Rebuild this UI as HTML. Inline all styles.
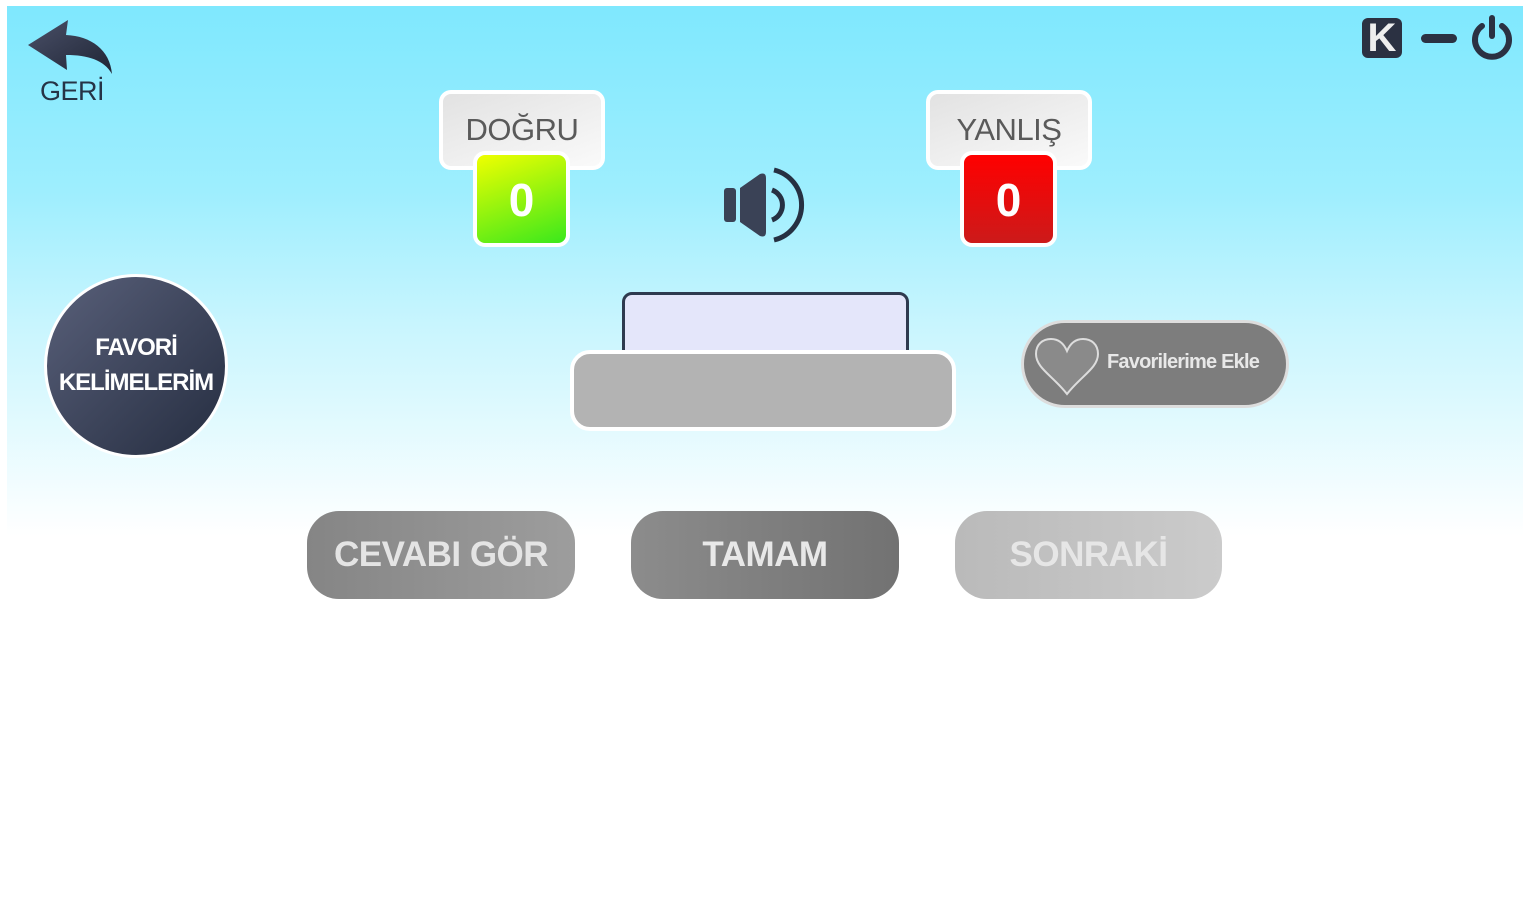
<!DOCTYPE html>
<html><head><meta charset="utf-8"><style>
*{margin:0;padding:0;box-sizing:border-box}
body{width:1527px;height:897px;background:#fff;position:relative;overflow:hidden;font-family:"Liberation Sans","DejaVu Sans",sans-serif}
.bg{position:absolute;left:7px;top:6px;width:1516px;height:530px;background:linear-gradient(#7fe8fe 0%,#9eeefe 35%,#c8f5fe 60%,#fff 100%)}
.abs{position:absolute}
.lbl{border:4px solid #fff;border-radius:12px;background:linear-gradient(160deg,#e2e2e2,#fafafa);color:#5a5a5a;font-size:31px;text-align:center;line-height:72px;width:166px;height:80px;letter-spacing:-0.5px}
.num{border:4px solid #fff;border-radius:12px;color:#fff;font-size:46px;font-weight:bold;text-align:center;line-height:90px;width:97px;height:96px}
.btn{border-radius:32px;color:#e4e4e4;font-weight:bold;font-size:35px;text-align:center;line-height:88px;width:268px;height:88px;letter-spacing:-0.5px}
</style></head><body>
<div class="bg"></div>
<svg class="abs" style="left:26px;top:18px" width="90" height="60" viewBox="0 0 90 60"><defs><linearGradient id="g1" x1="0" y1="0" x2="1" y2="1"><stop offset="0" stop-color="#4a5068"/><stop offset="1" stop-color="#1f2535"/></linearGradient></defs><path d="M2 27 L42 2 L40 17 C65 18 84 32 86 56 C78 42 62 37 40 37 L41 52 Z" fill="url(#g1)"/></svg>
<div class="abs" style="left:40px;top:76px;font-size:27px;color:#263346;letter-spacing:-0.5px">GERİ</div>
<div class="abs" style="left:1362px;top:18px;width:40px;height:40px;border-radius:6px;background:#2b3142;color:#eee;font-weight:bold;font-size:40px;line-height:40px;text-align:center">K</div>
<div class="abs" style="left:1421px;top:34px;width:36px;height:9px;border-radius:5px;background:#2b3142"></div>
<svg class="abs" style="left:1470px;top:14px" width="44" height="46" viewBox="0 0 44 46"><path d="M12 12 A17 17 0 1 0 32 12" fill="none" stroke="#2b3142" stroke-width="6" stroke-linecap="round"/><line x1="22" y1="4" x2="22" y2="22" stroke="#2b3142" stroke-width="6" stroke-linecap="round"/></svg>
<div class="abs lbl" style="left:439px;top:90px">DOĞRU</div>
<div class="abs num" style="left:473px;top:151px;background:linear-gradient(160deg,#f0ff00,#3ae81c)">0</div>
<div class="abs lbl" style="left:926px;top:90px">YANLIŞ</div>
<div class="abs num" style="left:960px;top:151px;background:linear-gradient(#ff0000,#cc1a1a)">0</div>
<svg class="abs" style="left:722px;top:166px" width="88" height="78" viewBox="0 0 88 78"><rect x="2" y="22" width="12" height="34" rx="3" fill="#3a4256"/><path d="M18 22 L38 8 Q44 6 44 12 L44 66 Q44 72 38 70 L18 56 Z" fill="#3a4256"/><path d="M50 24 A16 16 0 0 1 50 54" fill="none" stroke="#263042" stroke-width="5"/><path d="M52 4 A36 36 0 0 1 52 74" fill="none" stroke="#263042" stroke-width="5"/></svg>
<div class="abs" style="left:622px;top:292px;width:287px;height:80px;background:#e4e6fa;border:3px solid #2e3a4f;border-radius:10px"></div>
<div class="abs" style="left:570px;top:350px;width:386px;height:81px;background:#b3b3b3;border:4px solid #fff;border-radius:20px"></div>
<div class="abs" style="left:44px;top:274px;width:184px;height:184px;border-radius:50%;border:3px solid #fff;background:linear-gradient(135deg,#59607a,#252d40);color:#fff;font-weight:bold;font-size:24px;text-align:center;line-height:35px;padding-top:53px;letter-spacing:-1px">FAVORİ<br>KELİMELERİM</div>
<div class="abs" style="left:1021px;top:320px;width:268px;height:88px;border-radius:44px;border:3px solid #ddd;background:#7d7d7d"></div>
<svg class="abs" style="left:1033px;top:336px" width="68" height="60" viewBox="0 0 68 60"><path d="M34 58 C20 40 3 32 3 18 C3 8 10 3 18 3 C26 3 31 8 34 15 C37 8 42 3 50 3 C58 3 65 8 65 18 C65 32 48 40 34 58 Z" fill="#8a8a8a" stroke="#ddd" stroke-width="2"/></svg>
<div class="abs" style="left:1107px;top:351px;font-size:20px;font-weight:bold;color:#e8e8e8;letter-spacing:-0.8px">Favorilerime Ekle</div>
<div class="abs btn" style="left:307px;top:511px;background:linear-gradient(90deg,#858585,#9d9d9d)">CEVABI GÖR</div>
<div class="abs btn" style="left:631px;top:511px;background:linear-gradient(90deg,#8c8c8c,#727272);color:#e8e8e8">TAMAM</div>
<div class="abs btn" style="left:955px;top:511px;width:267px;background:linear-gradient(90deg,#bababa,#cbcbcb);color:#e6e6e6">SONRAKİ</div>
</body></html>
